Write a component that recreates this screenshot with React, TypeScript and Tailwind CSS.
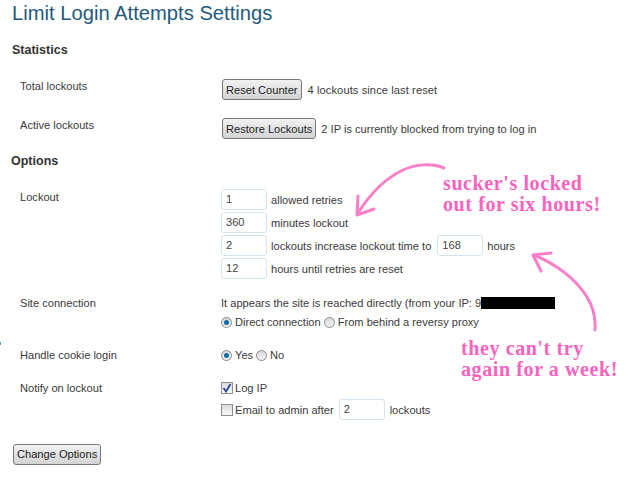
const text = "text-[11.1px] leading-[14px] text-[#3a3a3a]";

function Btn({ children }: { children: string }) {
  return (
    <button className="h-[21px] px-[3px] border border-[#777] rounded-[3px] bg-gradient-to-b from-[#f2f2f2] to-[#d4d4d4] text-[11.1px] text-[#222] whitespace-nowrap">
      {children}
    </button>
  );
}

function Field({ value, className = "" }: { value: string; className?: string }) {
  return (
    <span className={`w-[46px] h-[21px] border border-[#d5e3ec] rounded-[3px] bg-white pl-[4px] text-[11.1px] leading-[19px] text-[#444] inline-block shrink-0 ${className}`}>
      {value}
    </span>
  );
}

function Radio({ on = false }: { on?: boolean }) {
  return (
    <span className="w-[11px] h-[11px] rounded-full border border-[#8a8a8a] bg-gradient-to-b from-[#d8d8d8] to-[#f4f4f4] flex items-center justify-center shrink-0">
      {on && <span className="w-[5px] h-[5px] rounded-full bg-[#0b6ea8]" />}
    </span>
  );
}

function Check({ on = false }: { on?: boolean }) {
  return (
    <span className="w-[12px] h-[12px] border border-[#8f8f8f] bg-gradient-to-b from-[#dcdcdc] to-[#f6f6f6] flex items-center justify-center shrink-0">
      {on && (
        <svg width="10" height="10" viewBox="0 0 10 10">
          <path d="M1.5 5 L4 8.5 L8.5 1" fill="none" stroke="#2a4aa0" strokeWidth="1.8" />
        </svg>
      )}
    </span>
  );
}

function Row({ label, className, children }: { label: string; className: string; children: React.ReactNode }) {
  return (
    <div className={`grid grid-cols-[201px_1fr] pl-[8px] ${className}`}>
      <div className={text}>{label}</div>
      <div className={text}>{children}</div>
    </div>
  );
}

export default function App() {
  return (
    <main className="relative w-[640px] h-[480px] overflow-hidden bg-white pl-[12px] font-['Liberation_Sans',Arial,sans-serif]">
      <h1 className="text-[20.2px] leading-[26px] text-[#1f5a7a] h-[42px]">Limit Login Attempts Settings</h1>
      <h2 className="text-[12.5px] font-bold leading-[16px] text-[#333] h-[37px]">Statistics</h2>

      <Row label="Total lockouts" className="h-[39px]">
        <div className="flex items-center gap-[6px] ml-[1px]">
          <Btn>Reset Counter</Btn>
          <span className="tracking-[0.1px]">4 lockouts since last reset</span>
        </div>
      </Row>
      <Row label="Active lockouts" className="h-[35px]">
        <div className="flex items-center gap-[5px] ml-[1px]">
          <Btn>Restore Lockouts</Btn>
          <span>2 IP is currently blocked from trying to log in</span>
        </div>
      </Row>

      <h2 className="text-[12.5px] font-bold leading-[16px] text-[#333] h-[37px] -ml-[1px]">Options</h2>

      <Row label="Lockout" className="h-[106px]">
        <div className="flex flex-col gap-[2px] -mt-[1px]">
          <div className="flex items-center gap-[4px]"><Field value="1" /><span>allowed retries</span></div>
          <div className="flex items-center gap-[4px]"><Field value="360" /><span>minutes lockout</span></div>
          <div className="flex items-center gap-[4px]">
            <Field value="2" />
            <span>lockouts increase lockout time to</span>
            <Field value="168" className="ml-[2px]" />
            <span>hours</span>
          </div>
          <div className="flex items-center gap-[4px]"><Field value="12" /><span>hours until retries are reset</span></div>
        </div>
      </Row>

      <Row label="Site connection" className="h-[52px]">
        <div className="flex flex-col gap-[5px]">
          <div className="flex items-center h-[14px]">
            <span>It appears the site is reached directly (from your IP: 9</span>
            <span className="w-[74px] h-[12px] bg-black" />
          </div>
          <div className="flex items-center gap-[3px] h-[14px]">
            <Radio on /><span>Direct connection</span>
            <Radio /><span>From behind a reversy proxy</span>
          </div>
        </div>
      </Row>

      <Row label="Handle cookie login" className="h-[33px]">
        <div className="flex items-center gap-[3px] h-[14px]">
          <Radio on /><span>Yes</span>
          <Radio /><span>No</span>
        </div>
      </Row>

      <Row label="Notify on lockout" className="h-[63px]">
        <div className="flex flex-col -mt-[1px]">
          <div className="flex items-center gap-[2px] h-[16px]"><Check on /><span>Log IP</span></div>
          <div className="flex items-center gap-[2px] h-[21px] mt-[3px]">
            <Check /><span>Email to admin after</span>
            <Field value="2" className="ml-[3px]" />
            <span className="ml-[3px]">lockouts</span>
          </div>
        </div>
      </Row>

      <div className="flex ml-[1px]">
        <Btn>Change Options</Btn>
      </div>

      <span className="absolute left-0 top-[342px] w-[1px] h-[3px] bg-[#5b9cc4]" />

      <p className="absolute left-[443px] top-[173px] font-['Liberation_Serif',serif] font-bold text-[20px] leading-[21px] tracking-[0.6px] text-[#f763bf] whitespace-nowrap">
        sucker's locked<br />out for six hours!
      </p>
      <p className="absolute left-[461px] top-[338px] font-['Liberation_Serif',serif] font-bold text-[20px] leading-[21px] tracking-[0.6px] text-[#f763bf] whitespace-nowrap">
        they can't try<br />again for a week!
      </p>

      <svg className="absolute left-0 top-0 pointer-events-none" width="640" height="480" viewBox="0 0 640 480">
        <g fill="none" stroke="#f97fca" strokeLinecap="round" strokeLinejoin="round">
          <path d="M444 168 C432 163 416 164 403 170 C386 178 370 194 358 213" strokeWidth="3" />
          <path d="M358 196 L357 215 L374 209" strokeWidth="3" />
          <path d="M595 330 C596 316 592 305 587 297 C576 279 556 264 534 255" strokeWidth="3" />
          <path d="M551 253 L533 255 L541 271" strokeWidth="3" />
        </g>
      </svg>
    </main>
  );
}
